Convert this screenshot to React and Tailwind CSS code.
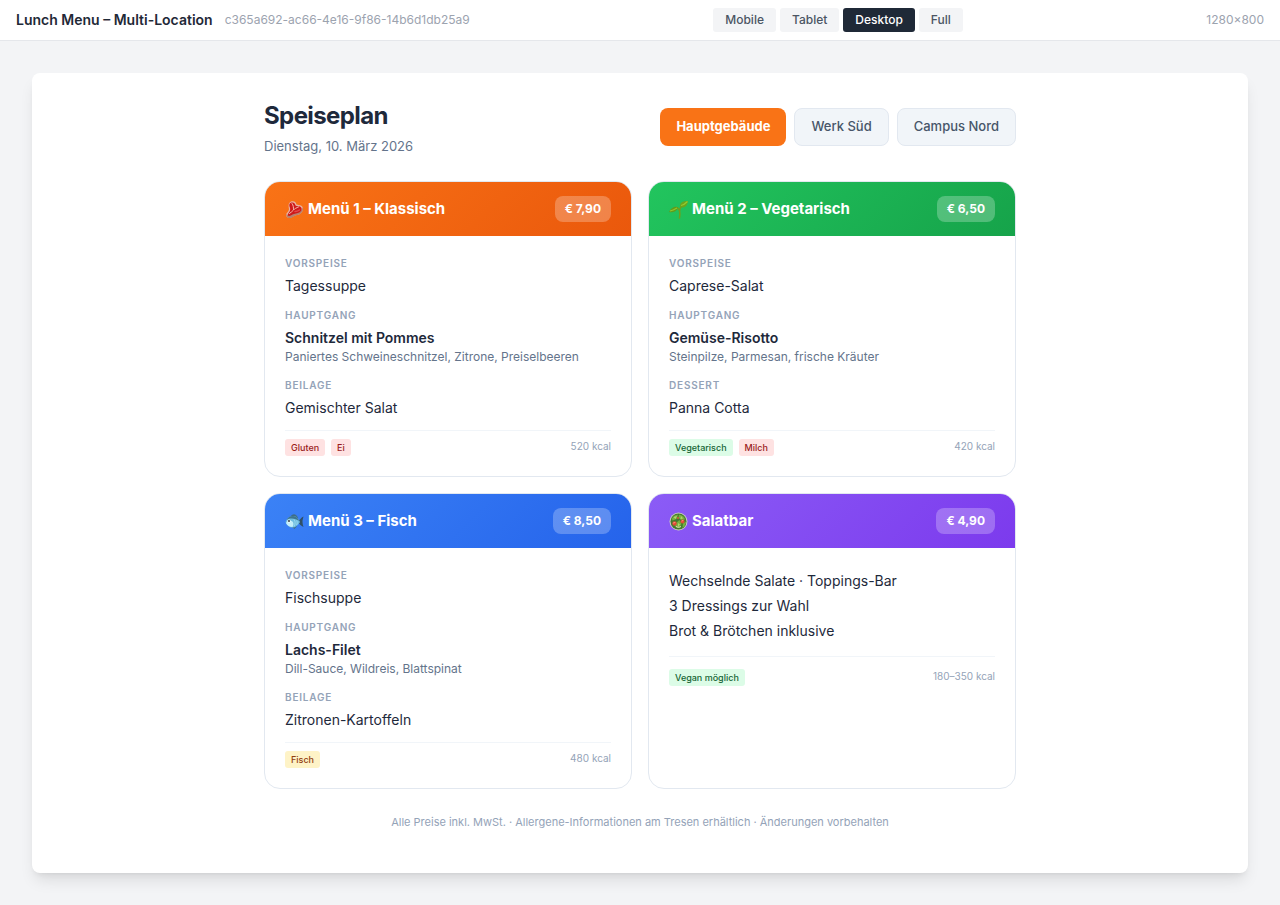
import { useState } from "react";
import clsx from "clsx";

function SteakIcon() {
  return (
    <svg viewBox="0 0 38 38" className="size-[19px] shrink-0" aria-hidden="true">
      <path d="M12 3c5-2 10 0 11 6 3 1 6 1 9 2 4 2 5 7 3 11-3 7-10 8-15 9-5 2-8 6-13 5-4-1-6-5-4-9 2-3 5-5 5-9C7 12 6 6 12 3Z" fill="#e9b3a3" />
      <path d="M3 28c2 3 6 2 9 0 6-4 13-2 19-7 3-2 4-5 5-6 1 9-5 14-12 15-7 2-10 7-16 6-4 0-6-4-5-8Z" fill="#b9806d" />
      <path d="M13 5c4-1 7 1 8 6 3 2 6 1 9 2 4 2 4 6 2 9-3 4-9 5-14 6-4 1-7 4-10 4-4-1-2-5 0-7 3-4 3-8 1-12-1-4 0-7 4-8Z" fill="#cf1a1a" />
      <path d="M14 7c3 4 3 8 3 12M27 14c-4 2-8 3-10 6-3 3-5 5-8 7" fill="none" stroke="#f4b8a9" strokeWidth="2" strokeLinecap="round" />
      <path d="M20 23c3 0 6-1 9-3" fill="none" stroke="#e5474a" strokeWidth="3" strokeLinecap="round" />
    </svg>
  );
}

function SeedlingIcon() {
  return (
    <svg viewBox="0 0 38 38" className="size-[19px] shrink-0" aria-hidden="true">
      <path d="M21 36c1-6 1-11 0-15-1-3-3-5-6-6" fill="none" stroke="#6f9e1c" strokeWidth="3" strokeLinecap="round" />
      <path d="M21 22c0-5 2-8 6-11" fill="none" stroke="#6f9e1c" strokeWidth="2.5" />
      <path d="M22 12c0-8 7-10 16-10-1 7-4 12-10 13-3 0-6-1-6-3Z" fill="#6aa51c" />
      <path d="M24 11c5-1 9-4 13-8" fill="none" stroke="#93c92f" strokeWidth="2.5" />
      <path d="M18 15c-5-4-14 0-18 9 7 2 15 0 18-9Z" fill="#5f9c1a" />
      <path d="M2 22c5-1 9-3 14-6" fill="none" stroke="#8fc62c" strokeWidth="2.5" />
    </svg>
  );
}

function FishIcon() {
  return (
    <svg viewBox="0 0 38 38" className="size-[19px] shrink-0" aria-hidden="true">
      <path d="M11 9c5-7 12-5 15 3l-7 3ZM13 29l6 5 5-6Z" fill="#3f6d86" />
      <path d="M26 20c3-4 6-9 11-11-1 4-2 7-2 10 0 4 1 8 2 11-5-2-8-6-11-10Z" fill="#2f5067" />
      <path d="M1 20C4 12 9 8 16 8c7 0 11 6 14 12-4 7-9 11-15 11C8 31 4 27 1 20Z" fill="#6fbde0" />
      <path d="M3 16C6 11 10 8 16 8c6 0 10 5 13 10-8-5-18-7-26-2Z" fill="#3f7590" />
      <path d="M2 22c3-5 10-6 13-3 3 3 2 8 0 11-6 0-11-3-13-8Z" fill="#c4eefa" />
      <path d="M18 15c3 4 3 9 0 14M23 17c2 3 2 6 0 9" fill="none" stroke="#a5ddf2" strokeWidth="1.5" />
      <circle cx="8" cy="18" r="3.2" fill="#fff" />
      <circle cx="8" cy="18" r="1.8" fill="#17242e" />
    </svg>
  );
}

function SaladIcon() {
  return (
    <svg viewBox="0 0 38 38" className="size-[19px] shrink-0" aria-hidden="true">
      <circle cx="19" cy="19" r="18" fill="#c9cdbd" />
      <circle cx="19" cy="19" r="16" fill="#447a30" />
      <path d="M6 13c3-6 8-7 12-8l-3 9-8 3ZM20 5c7 1 11 5 12 10l-8 1-5-5ZM13 23l8-7 4 8-5 8-8-3ZM28 23l6-4c0 6-3 10-7 13Z" fill="#76b13f" />
      <path d="M9 10l7-2-3 6ZM24 8l4 5-5 1ZM18 22l4 3-4 5Z" fill="#b4d56d" />
      <circle cx="11" cy="23" r="4.5" fill="#df4936" />
      <circle cx="27" cy="19" r="4" fill="#e14b35" />
      <circle cx="18" cy="12" r="2" fill="#d9593a" />
      <path d="M9 22l3-1M26 18l2-1" stroke="#ff9a7d" strokeWidth="2" strokeLinecap="round" />
      <path d="M14 29c3 2 7 2 10 0" fill="none" stroke="#e7e3bd" strokeWidth="2" />
    </svg>
  );
}

const tagTones = {
  red: "bg-[#fee2e2] text-[#991b1b]",
  green: "bg-[#dcfce7] text-[#166534]",
  amber: "bg-[#fef3c7] text-[#92400e]",
};

const menus = [
  {
    title: "Menü 1 – Klassisch",
    Icon: SteakIcon,
    price: "€ 7,90",
    header: "bg-[linear-gradient(135deg,#f97316,#ea580c)]",
    courses: [
      { label: "Vorspeise", name: "Tagessuppe" },
      { label: "Hauptgang", name: "Schnitzel mit Pommes", detail: "Paniertes Schweineschnitzel, Zitrone, Preiselbeeren" },
      { label: "Beilage", name: "Gemischter Salat" },
    ],
    tags: [["Gluten", "red"], ["Ei", "red"]],
    kcal: "520 kcal",
  },
  {
    title: "Menü 2 – Vegetarisch",
    Icon: SeedlingIcon,
    price: "€ 6,50",
    header: "bg-[linear-gradient(135deg,#22c55e,#16a34a)]",
    courses: [
      { label: "Vorspeise", name: "Caprese-Salat" },
      { label: "Hauptgang", name: "Gemüse-Risotto", detail: "Steinpilze, Parmesan, frische Kräuter" },
      { label: "Dessert", name: "Panna Cotta" },
    ],
    tags: [["Vegetarisch", "green"], ["Milch", "red"]],
    kcal: "420 kcal",
  },
  {
    title: "Menü 3 – Fisch",
    Icon: FishIcon,
    price: "€ 8,50",
    header: "bg-[linear-gradient(135deg,#3b82f6,#2563eb)]",
    courses: [
      { label: "Vorspeise", name: "Fischsuppe" },
      { label: "Hauptgang", name: "Lachs-Filet", detail: "Dill-Sauce, Wildreis, Blattspinat" },
      { label: "Beilage", name: "Zitronen-Kartoffeln" },
    ],
    tags: [["Fisch", "amber"]],
    kcal: "480 kcal",
  },
  {
    title: "Salatbar",
    Icon: SaladIcon,
    price: "€ 4,90",
    header: "bg-[linear-gradient(135deg,#8b5cf6,#7c3aed)]",
    lines: ["Wechselnde Salate · Toppings-Bar", "3 Dressings zur Wahl", "Brot & Brötchen inklusive"],
    tags: [["Vegan möglich", "green"]],
    kcal: "180–350 kcal",
  },
];

function MenuCard({ title, Icon, price, header, courses, lines, tags, kcal }) {
  return (
    <article className="overflow-hidden rounded-2xl border border-[#e2e8f0] bg-white">
      <header className={clsx("flex items-center justify-between px-5 py-3.5 text-white", header)}>
        <h2 className="flex items-center gap-1 text-[15px] leading-6 font-bold">
          <Icon />
          {title}
        </h2>
        <span className="rounded-lg bg-white/25 px-2.5 text-xs leading-[26px] font-bold">{price}</span>
      </header>
      <div className="p-5">
        {courses && (
          <dl className="mb-3 flex flex-col gap-3">
            {courses.map((course) => (
              <div key={course.label}>
                <dt className="mb-1.5 text-[10px] leading-[14px] font-semibold tracking-[0.08em] text-[#94a3b8] uppercase">{course.label}</dt>
                <dd className={clsx("text-sm leading-5 text-[#1e293b]", course.detail && "font-semibold")}>{course.name}</dd>
                {course.detail && <dd className="text-xs leading-[18px] text-[#64748b]">{course.detail}</dd>}
              </div>
            ))}
          </dl>
        )}
        {lines && (
          <div className="mb-[13px] text-sm leading-[25px] text-[#1e293b]">
            {lines.map((line) => (
              <p key={line}>{line}</p>
            ))}
          </div>
        )}
        <footer className={clsx("flex items-start justify-between border-t border-[#f1f5f9]", lines ? "pt-3" : "pt-2")}>
          <ul className="flex gap-1.5">
            {tags.map(([text, tone]) => (
              <li key={text} className={clsx("rounded-[3px] px-1.5 text-[9px] leading-[17px] font-medium", tagTones[tone])}>
                {text}
              </li>
            ))}
          </ul>
          <span className="text-[10px] leading-[14px] text-[#94a3b8]">{kcal}</span>
        </footer>
      </div>
    </article>
  );
}

const viewports = ["Mobile", "Tablet", "Desktop", "Full"];
const locations = ["Hauptgebäude", "Werk Süd", "Campus Nord"];

export default function App() {
  const [viewport, setViewport] = useState("Desktop");
  const [location, setLocation] = useState("Hauptgebäude");

  return (
    <div className="flex min-h-screen flex-col bg-[#f3f4f6] font-['Inter',sans-serif]">
      <header className="flex items-center justify-between border-b border-[#e5e7eb] bg-white px-4 py-2">
        <div className="flex items-center gap-3">
          <span className="text-sm font-semibold text-[#1f2937]">Lunch Menu – Multi-Location</span>
          <span className="text-xs text-[#9ca3af]">c365a692-ac66-4e16-9f86-14b6d1db25a9</span>
        </div>
        <nav className="flex gap-1" aria-label="Viewport">
          {viewports.map((name) => (
            <button
              key={name}
              type="button"
              aria-pressed={name === viewport}
              onClick={() => setViewport(name)}
              className={clsx(
                "rounded-[3px] px-3 py-1 text-xs font-medium",
                name === viewport ? "bg-[#1f2937] text-white" : "bg-[#f3f4f6] text-[#4b5563]"
              )}
            >
              {name}
            </button>
          ))}
        </nav>
        <span className="text-xs text-[#9ca3af]">1280×800</span>
      </header>

      <div className="p-8">
        <main className="min-h-[800px] rounded-lg bg-white p-6 shadow-lg">
          <div className="mx-auto max-w-[752px]">
            <div className="mb-6 flex flex-wrap items-center justify-between gap-4">
              <div>
                <h1 className="text-2xl leading-[38px] font-bold tracking-tight text-[#1e293b]">Speiseplan</h1>
                <p className="text-[13px] leading-[22px] text-[#64748b]">Dienstag, 10. März 2026</p>
              </div>
              <div className="flex gap-2">
                {locations.map((name) => (
                  <button
                    key={name}
                    type="button"
                    aria-pressed={name === location}
                    onClick={() => setLocation(name)}
                    className={clsx(
                      "h-[38px] rounded-lg px-4 text-[13px]",
                      name === location
                        ? "bg-[#f97316] font-bold text-white"
                        : "border border-[#e2e8f0] bg-[#f1f5f9] font-medium text-[#475569]"
                    )}
                  >
                    {name}
                  </button>
                ))}
              </div>
            </div>

            <div className="grid grid-cols-1 gap-4 sm:grid-cols-2">
              {menus.map((menu) => (
                <MenuCard key={menu.title} {...menu} />
              ))}
            </div>

            <p className="mt-6 text-center text-[11px] leading-[18px] text-[#94a3b8]">
              Alle Preise inkl. MwSt. · Allergene-Informationen am Tresen erhältlich · Änderungen vorbehalten
            </p>
          </div>
        </main>
      </div>
    </div>
  );
}
